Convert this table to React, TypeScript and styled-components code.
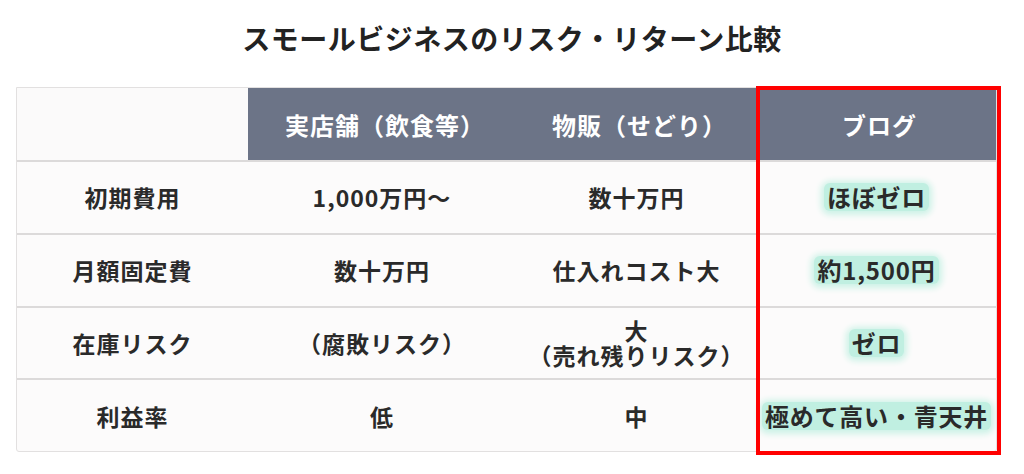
import * as React from "react"
import styled, { createGlobalStyle } from "styled-components"

const GlobalStyle = createGlobalStyle`
  html, body {
    margin: 0;
    padding: 0;
    background: #ffffff;
  }
  body {
    font-family: "Noto Sans CJK JP", "Noto Sans", sans-serif;
    color: #2a2a2a;
  }
`

const Page = styled.div`
  width: 1024px;
  height: 474px;
  display: flex;
  flex-direction: column;
  align-items: flex-start;
`

const Title = styled.h1`
  align-self: stretch;
  margin: 0;
  height: 87px;
  display: flex;
  align-items: center;
  justify-content: center;
  padding-bottom: 12px;
  box-sizing: border-box;
  font-size: 28px;
  font-weight: 700;
  letter-spacing: 0.5px;
  color: #222;
`

const TableWrap = styled.div`
  position: relative;
  margin-left: 16px;
`

const Table = styled.div`
  width: 981px;
  border: 1px solid #e2e0e0;
  border-radius: 0 0 3px 3px;
  background: #fcfbfb;
  box-sizing: border-box;
`

const Row = styled.div<{ $head?: boolean }>`
  display: grid;
  grid-template-columns: 231px 268px 241px 239px;
  height: ${p => (p.$head ? "72px" : "72.8px")};
  box-sizing: border-box;
  border-top: ${p => (p.$head ? "none" : "2px solid #dcdada")};
`

const HeadCell = styled.div<{ $blank?: boolean }>`
  display: flex;
  align-items: center;
  justify-content: center;
  padding-left: 6px;
  background: ${p => (p.$blank ? "#fbfafa" : "#6c7487")};
  color: #ffffff;
  font-size: 24px;
  font-weight: 700;
  letter-spacing: 1px;
`

const Cell = styled.div<{ $stack?: boolean }>`
  display: flex;
  flex-direction: column;
  align-items: center;
  justify-content: center;
  text-align: center;
  font-size: 23px;
  font-weight: 700;
  letter-spacing: 1px;
  line-height: ${p => (p.$stack ? "25px" : "1.4")};
  color: #2a2a2a;
`

const Marker = styled.span`
  background: #c0efe1;
  border-radius: 6px;
  box-shadow: 0 1px 6px 3px #cdf2e7;
  padding: 0 3px;
  font-size: 24px;
  letter-spacing: 0.8px;
  line-height: 28px;
  white-space: nowrap;
`

const Frame = styled.div`
  position: absolute;
  left: 740px;
  top: -1px;
  width: 245px;
  height: 369px;
  border: 4px solid #ff0000;
  box-sizing: border-box;
  pointer-events: none;
`

type RowData = {
  label: string
  store: React.ReactNode
  sedori: React.ReactNode
  blog: string
  stack?: boolean
}

const rows: RowData[] = [
  { label: "初期費用", store: "1,000万円〜", sedori: "数十万円", blog: "ほぼゼロ" },
  { label: "月額固定費", store: "数十万円", sedori: "仕入れコスト大", blog: "約1,500円" },
  {
    label: "在庫リスク",
    store: "（腐敗リスク）",
    sedori: (
      <>
        <span>大</span>
        <span>（売れ残りリスク）</span>
      </>
    ),
    blog: "ゼロ",
    stack: true,
  },
  { label: "利益率", store: "低", sedori: "中", blog: "極めて高い・青天井" },
]

export default function App() {
  return (
    <Page>
      <GlobalStyle />
      <Title>スモールビジネスのリスク・リターン比較</Title>
      <TableWrap>
        <Table>
          <Row $head>
            <HeadCell $blank />
            <HeadCell>実店舗（飲食等）</HeadCell>
            <HeadCell>物販（せどり）</HeadCell>
            <HeadCell>ブログ</HeadCell>
          </Row>
          {rows.map(r => (
            <Row key={r.label}>
              <Cell>{r.label}</Cell>
              <Cell>{r.store}</Cell>
              <Cell $stack={r.stack}>{r.sedori}</Cell>
              <Cell>
                <Marker>{r.blog}</Marker>
              </Cell>
            </Row>
          ))}
        </Table>
        <Frame />
      </TableWrap>
    </Page>
  )
}
